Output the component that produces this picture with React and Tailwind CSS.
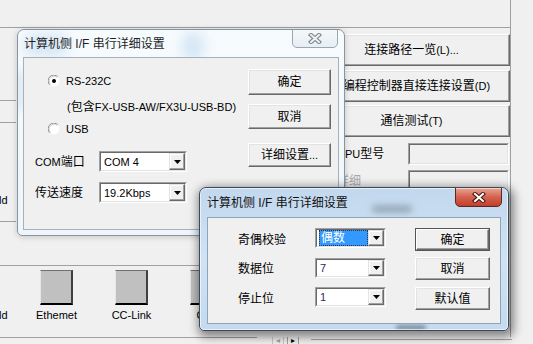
import React from "react";

const L = ({ children }) => <span className="text-[11px]">{children}</span>;

function Btn({ children, className = "" }) {
  return (
    <div
      className={`flex items-center justify-center bg-[#f0f0f0] border border-t-white border-l-white border-r-[#696969] border-b-[#696969] shadow-[inset_-1px_-1px_0_#a0a0a0,inset_1px_1px_0_#e3e3e3] ${className}`}
    >
      {children}
    </div>
  );
}

function DefBtn({ children, className = "" }) {
  return (
    <div className={`border border-[#555555] ${className}`}>
      <div className="w-full h-full flex items-center justify-center bg-[#f0f0f0] border border-t-white border-l-white border-r-[#696969] border-b-[#696969] shadow-[inset_-1px_-1px_0_#a0a0a0]">
        {children}
      </div>
    </div>
  );
}

function Arrow() {
  return (
    <svg width="7" height="4" viewBox="0 0 7 4">
      <path d="M0 0 H7 L3.5 4 Z" fill="#000" />
    </svg>
  );
}

function Combo({ children, className = "" }) {
  return (
    <div className={`border border-t-[#a0a0a0] border-l-[#a0a0a0] border-b-white border-r-white ${className}`}>
      <div className="w-full h-full flex bg-white border border-t-[#696969] border-l-[#696969] border-b-[#e3e3e3] border-r-[#e3e3e3]">
        <div className="flex-1 flex items-center min-w-0">{children}</div>
        <div className="w-[16px] flex items-center justify-center bg-[#f0f0f0] border border-t-[#e3e3e3] border-l-[#e3e3e3] border-r-[#696969] border-b-[#696969] shadow-[inset_-1px_-1px_0_#a0a0a0,inset_1px_1px_0_#ffffff]">
          <Arrow />
        </div>
      </div>
    </div>
  );
}

function Sunken({ className = "" }) {
  return (
    <div className={`border border-t-[#a0a0a0] border-l-[#a0a0a0] border-b-white border-r-white ${className}`}>
      <div className="w-full h-full border border-t-[#696969] border-l-[#696969] border-b-[#e3e3e3] border-r-[#e3e3e3] bg-[#f0f0f0]" />
    </div>
  );
}

function Radio({ checked }) {
  return (
    <svg width="12" height="12" viewBox="0 0 12 12">
      <circle cx="6" cy="6" r="5.5" fill="#ffffff" />
      <path d="M1.8 9.9 A5.5 5.5 0 0 1 9.9 1.8" stroke="#8a8a8a" strokeWidth="1" fill="none" />
      <path d="M2.6 9.2 A4.5 4.5 0 0 1 9.2 2.6" stroke="#d4d4d4" strokeWidth="1" fill="none" />
      <path d="M9.9 1.8 A5.5 5.5 0 0 1 1.8 9.9" stroke="#f5f5f5" strokeWidth="1" fill="none" />
      {checked && <circle cx="6" cy="6" r="2" fill="#000" />}
    </svg>
  );
}

function XGlyph({ outline, fill }) {
  return (
    <svg width="14" height="11" viewBox="0 0 14 11">
      <path d="M3 2 L11 9 M11 2 L3 9" stroke={outline} strokeWidth="4.2" strokeLinecap="square" fill="none" />
      <path d="M3 2 L11 9 M11 2 L3 9" stroke={fill} strokeWidth="2" strokeLinecap="square" fill="none" />
    </svg>
  );
}

function IconSlot({ label }) {
  return (
    <div className="w-[75px] flex flex-col items-center shrink-0">
      <div className="w-[33px] h-[35px] bg-[#c0c0c0] border-t border-l border-t-[#707070] border-l-[#e6e6e6] border-r-2 border-b-2 border-r-[#404040] border-b-black" />
      <div className="mt-[4px] text-[11px] leading-[12px] whitespace-nowrap">{label}</div>
    </div>
  );
}

export default function App() {
  return (
    <div className="relative w-[533px] h-[344px] overflow-hidden bg-[#f0f0f0] text-black text-[12px] leading-[14px] font-['Liberation_Sans','Noto_Sans_CJK_SC',sans-serif]">
      {/* background application window */}
      <div className="flex flex-col h-full">
        <div className="w-[511px] h-[28px] shrink-0 border-b border-r border-[#a0a0a0]" />
        <div className="w-[511px] flex flex-1 border-r border-[#a0a0a0]">
          {/* left area */}
          <div className="w-[313px] flex flex-col shrink-0">
            <div className="h-[72px]" />
            <div className="w-[16px] h-[23px] border-y border-[#a0a0a0]" />
            <div className="w-[16px] h-[99px] border-b border-[#a0a0a0] flex items-end pb-[14px] overflow-hidden">
              <span className="text-[11px] -ml-[1px]">ld</span>
            </div>
            <div className="h-[44px] border-b border-[#a0a0a0]" />
            <div className="flex mt-[4px] relative">
              <div className="w-[19px] shrink-0 flex items-end">
                <span className="text-[11px] leading-[12px] -ml-[1px] mt-[39px]">ld</span>
              </div>
              <IconSlot label="Ethemet" />
              <IconSlot label="CC-Link" />
              <IconSlot label="C24" />
            </div>
          </div>
          {/* right column */}
          <div className="flex-1 flex flex-col">
            <Btn className="mt-[6px] h-[32px] whitespace-nowrap">连接路径一览<L>(L)...</L></Btn>
            <Btn className="mt-[4px] h-[32px] whitespace-nowrap pl-[10px]">编程控制器直接连接设置<L>(D)</L></Btn>
            <Btn className="mt-[3px] h-[32px] whitespace-nowrap">通信测试<L>(T)</L></Btn>
            <div className="mt-[6px] h-[22px] flex items-center">
              <div className="w-[95px] pl-[24px] whitespace-nowrap"><L>CPU</L>型号</div>
              <Sunken className="w-[101px] h-[22px]" />
            </div>
            <div className="mt-[5px] h-[22px] flex items-center">
              <div className="w-[95px] pl-[24px] whitespace-nowrap text-[#a8a8a8]">详细</div>
              <Sunken className="w-[101px] h-[22px]" />
            </div>
          </div>
        </div>
        {/* bottom strip */}
        <div className="h-[7px] flex items-start shrink-0">
          <div className="w-[257px] h-[3px] border-t border-[#a0a0a0]" />
          <div className="ml-[15px] flex h-[7px]">
            <div className="w-[12px] flex items-start justify-center border-x border-[#c8c8c8] text-[8px] leading-[8px] text-[#a0a0a0]">◂</div>
            <div className="w-[12px] ml-[3px] flex items-start justify-center border-x border-[#a0a0a0] text-[8px] leading-[8px]">▸</div>
          </div>
          <div className="ml-[12px] w-[201px] h-[3px] mt-[2px] border-t border-[#a0a0a0]" />
        </div>
      </div>

      {/* Dialog 1 (inactive) */}
      <div className="absolute left-[17px] top-[29px] w-[328px] h-[207px] rounded-t-[7px] rounded-b-[5px] border border-[#8a949c] bg-linear-to-b from-[#f6fbfe] to-[#eef6fb] shadow-[0_1px_6px_rgba(0,0,0,0.18)] flex flex-col overflow-hidden">
        <div className="absolute left-[6px] top-[4px] w-[44px] h-[22px] rounded-full bg-[#c9def0] blur-[6px] opacity-70" />
        <div className="absolute left-[164px] top-[2px] w-[22px] h-[28px] rounded-full bg-[#c9def0] blur-[6px] opacity-70" />
        <div className="absolute left-[-2px] top-[40px] w-[8px] h-[40px] rounded-full bg-[#c9def0] blur-[4px] opacity-70" />
        <div className="relative h-[27px] shrink-0 flex items-center pl-[6px] text-[#1e1e1e] whitespace-nowrap">
          计算机侧&nbsp;I/F&nbsp;串行详细设置
        </div>
        <div className="absolute top-[-1px] right-[6px] w-[46px] h-[19px] rounded-b-[5px] border border-[#9aa6b1] bg-linear-to-b from-[#f4f8fb] to-[#e6eef4] flex items-center justify-center">
          <XGlyph outline="#7c848c" fill="#eef2f5" />
        </div>
        <div className="relative flex-1 mx-[5px] mb-[5px] border border-[#a6b0ba] bg-[#f0f0f0] flex">
          <div className="w-[224px] flex flex-col shrink-0">
            <div className="mt-[16px] h-[14px] flex items-center pl-[24px]">
              <Radio checked />
              <span className="ml-[6px]"><L>RS-232C</L></span>
            </div>
            <div className="mt-[12px] h-[14px] flex items-center pl-[43px] whitespace-nowrap">
              <L>(</L>包含<L>FX-USB-AW/FX3U-USB-BD)</L>
            </div>
            <div className="mt-[8px] h-[14px] flex items-center pl-[24px]">
              <Radio />
              <span className="ml-[6px]"><L>USB</L></span>
            </div>
            <div className="mt-[15px] h-[21px] flex items-center">
              <div className="w-[75px] pl-[11px] whitespace-nowrap"><L>COM</L>端口</div>
              <Combo className="w-[88px] h-[21px]">
                <span className="pl-[3px]"><L>COM 4</L></span>
              </Combo>
            </div>
            <div className="mt-[10px] h-[21px] flex items-center">
              <div className="w-[75px] pl-[11px] whitespace-nowrap">传送速度</div>
              <Combo className="w-[88px] h-[21px]">
                <span className="pl-[3px]"><L>19.2Kbps</L></span>
              </Combo>
            </div>
          </div>
          <div className="w-[83px] flex flex-col shrink-0">
            <Btn className="mt-[11px] h-[26px]">确定</Btn>
            <Btn className="mt-[9px] h-[25px]">取消</Btn>
            <Btn className="mt-[14px] h-[24px] whitespace-nowrap">详细设置<L>...</L></Btn>
          </div>
        </div>
      </div>

      {/* Dialog 2 (active) */}
      <div className="absolute left-[199px] top-[187px] w-[310px] h-[144px] rounded-t-[7px] rounded-b-[5px] border border-[#3c4a58] bg-linear-to-b from-[#c2d8ee] via-[#d0e2f4] to-[#c4daef] shadow-[2px_3px_10px_3px_rgba(0,0,0,0.45)] flex flex-col overflow-hidden">
        <div className="absolute left-[172px] top-[17px] w-[40px] h-[8px] rounded-full bg-[#7b8a99] blur-[3px] opacity-60" />
        <div className="absolute left-[196px] bottom-[0px] w-[30px] h-[5px] rounded-full bg-[#5d6b78] blur-[2px] opacity-70" />
        <div className="absolute inset-0 rounded-t-[6px] rounded-b-[4px] border border-white/60 pointer-events-none" />
        <div className="relative h-[29px] shrink-0 flex items-center pl-[7px] text-[#111111] whitespace-nowrap">
          计算机侧&nbsp;I/F&nbsp;串行详细设置
        </div>
        <div className="absolute top-[-1px] right-[6px] w-[47px] h-[20px] rounded-b-[5px] border border-[#5a2820] bg-linear-to-b from-[#e8a596] via-[#d4624f] to-[#c23e2c] shadow-[inset_0_1px_0_rgba(255,255,255,0.5)] flex items-center justify-center">
          <XGlyph outline="#4a1a14" fill="#ffffff" />
        </div>
        <div className="relative flex-1 mx-[7px] mb-[6px] border border-[#8ea4b8] bg-[#f0f0f0] flex flex-col">
          <div className="mt-[10px] h-[23px] flex">
            <div className="w-[107px] pl-[30px] pt-[5px]">奇偶校验</div>
            <Combo className="w-[71px] h-[20px]">
              <div className="ml-[2px] w-[49px] h-[16px] bg-[#3399ff] outline-1 outline-dotted outline-[#333333] -outline-offset-1 text-white flex items-center pl-[2px]">偶数</div>
            </Combo>
            <DefBtn className="ml-[29px] w-[75px] h-[23px]">确定</DefBtn>
          </div>
          <div className="mt-[6px] h-[23px] flex">
            <div className="w-[107px] pl-[30px] pt-[5px]">数据位</div>
            <Combo className="w-[71px] h-[20px] mt-[1px]">
              <span className="pl-[3px] text-[#2a2a60]"><L>7</L></span>
            </Combo>
            <Btn className="ml-[29px] w-[75px] h-[23px]">取消</Btn>
          </div>
          <div className="mt-[7px] h-[23px] flex">
            <div className="w-[107px] pl-[30px] pt-[5px]">停止位</div>
            <Combo className="w-[71px] h-[20px]">
              <span className="pl-[3px] text-[#2a2a60]"><L>1</L></span>
            </Combo>
            <Btn className="ml-[29px] w-[75px] h-[23px]">默认值</Btn>
          </div>
        </div>
      </div>
    </div>
  );
}
